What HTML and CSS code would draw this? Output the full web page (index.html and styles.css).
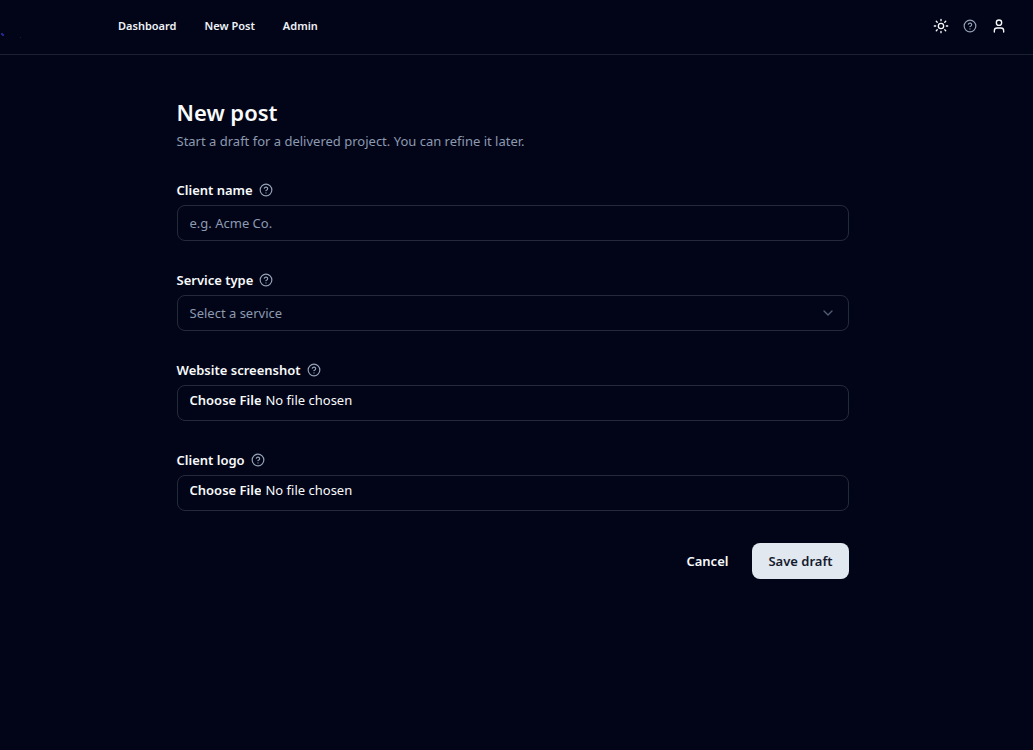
FILE: index.html
```
<!DOCTYPE html>
<html lang="en">
<head>
<meta charset="utf-8">
<meta name="viewport" content="width=device-width, initial-scale=1">
<title>New post</title>
<link rel="stylesheet" href="styles.css">
</head>
<body>
<svg class="defs" aria-hidden="true">
  <symbol id="help" viewBox="0 0 24 24"><circle cx="12" cy="12" r="10"/><path d="M9.09 9a3 3 0 0 1 5.83 1c0 2-3 3-3 3"/><path d="M12 17h.01"/></symbol>
</svg>
<header class="topbar">
  <a class="brand" href="#" aria-label="Home"><svg class="brand-mark" viewBox="0 0 24 16" aria-hidden="true"><path d="M1 9h2v1h1v2H2v-1H1z" fill="#24278a"/><path d="M20 13h1v1h-1z" fill="#15184f"/></svg></a>
  <nav class="nav">
    <a href="#">Dashboard</a>
    <a href="#">New Post</a>
    <a href="#">Admin</a>
  </nav>
  <div class="tools">
    <button type="button" class="tool" aria-label="Theme"><svg class="icon" viewBox="0 0 24 24"><circle cx="12" cy="12" r="4"/><path d="M12 2v2M12 20v2M4.93 4.93l1.41 1.41M17.66 17.66l1.41 1.41M2 12h2M20 12h2M6.34 17.66l-1.41 1.41M19.07 4.93l-1.41 1.41"/></svg></button>
    <button type="button" class="tool muted" aria-label="Help"><svg class="icon icon-small"><use href="#help"/></svg></button>
    <button type="button" class="tool" aria-label="Account"><svg class="icon" viewBox="0 0 24 24"><path d="M19 21v-2a4 4 0 0 0-4-4H9a4 4 0 0 0-4 4v2"/><circle cx="12" cy="7" r="4"/></svg></button>
  </div>
</header>
<main class="page">
  <div class="content">
    <h1 class="title">New post</h1>
    <p class="subtitle">Start a draft for a delivered project. You can refine it later.</p>
    <form class="form">
      <div class="field">
        <div class="label-row"><label for="client">Client name</label><button type="button" class="hint" aria-label="About client name"><svg class="icon icon-small"><use href="#help"/></svg></button></div>
        <input class="control" id="client" type="text" placeholder="e.g. Acme Co.">
      </div>
      <div class="field">
        <div class="label-row"><label for="service">Service type</label><button type="button" class="hint" aria-label="About service type"><svg class="icon icon-small"><use href="#help"/></svg></button></div>
        <div class="select-wrap">
          <select class="control select" id="service"><option>Select a service</option></select>
          <svg class="icon chevron" viewBox="0 0 24 24"><path d="m6 9 6 6 6-6"/></svg>
        </div>
      </div>
      <div class="field">
        <div class="label-row"><label for="shot">Website screenshot</label><button type="button" class="hint" aria-label="About website screenshot"><svg class="icon icon-small"><use href="#help"/></svg></button></div>
        <input class="control file" id="shot" type="file">
      </div>
      <div class="field">
        <div class="label-row"><label for="logo">Client logo</label><button type="button" class="hint" aria-label="About client logo"><svg class="icon icon-small"><use href="#help"/></svg></button></div>
        <input class="control file" id="logo" type="file">
      </div>
      <div class="actions">
        <button type="button" class="btn">Cancel</button>
        <button type="submit" class="btn btn-primary">Save draft</button>
      </div>
    </form>
  </div>
</main>
</body>
</html>
```
FILE: styles.css
```
* { box-sizing: border-box; }
body {
  margin: 0;
  min-height: 100vh;
  background: #020517;
  color: #f8fafc;
  font: 13px/20px "Segoe UI", "Noto Sans", "Open Sans", sans-serif;
}
button, input, select { font: inherit; color: inherit; }
button { background: none; border: 0; padding: 0; cursor: pointer; }
.defs { display: none; }
.icon {
  display: block;
  width: 16px;
  height: 16px;
  fill: none;
  stroke: currentColor;
  stroke-width: 2;
  stroke-linecap: round;
  stroke-linejoin: round;
}
.icon-small { width: 14px; height: 14px; }
.topbar {
  display: flex;
  align-items: center;
  height: 55px;
  padding: 0 26px 2px 0;
  border-bottom: 1px solid #1c2132;
}
.brand { width: 118px; padding-top: 12px; }
.brand-mark { display: block; width: 24px; height: 16px; }
.nav { display: flex; gap: 28px; font-size: 11px; font-weight: 600; }
.nav a { color: #eef2f7; text-decoration: none; }
.tools { display: flex; align-items: center; gap: 14px; margin-left: auto; }
.muted, .hint { color: #94a3b8; }
.page { padding: 44px 32px 44px 24px; }
.content { max-width: 672px; margin: 0 auto; }
.title { margin: 0; font-size: 22px; line-height: 26px; font-weight: 600; }
.subtitle { margin: 6px 0 32px; color: #8c9ab1; }
.form { display: grid; gap: 32px; }
.field { display: grid; gap: 8px; }
.label-row { display: flex; align-items: center; gap: 6px; line-height: 14px; font-weight: 600; }
.control {
  display: block;
  width: 100%;
  height: 36px;
  padding: 4px 12px;
  border: 1px solid #252a3a;
  border-radius: 8px;
  background: transparent;
}
.control::placeholder { color: #8c9ab1; opacity: 1; }
.select-wrap { position: relative; }
.select { appearance: none; color: #8c9ab1; }
.chevron { position: absolute; right: 13px; top: 10px; color: #515d73; pointer-events: none; }
.file::file-selector-button {
  margin: 0 4px 0 0;
  padding: 0;
  border: 0;
  background: none;
  color: inherit;
  font: inherit;
  font-weight: 600;
}
.actions { display: flex; justify-content: flex-end; gap: 8px; }
.btn { height: 36px; padding: 0 16px; border-radius: 8px; font-weight: 600; }
.btn-primary { background: #e2e8f0; color: #141b2e; }
```
